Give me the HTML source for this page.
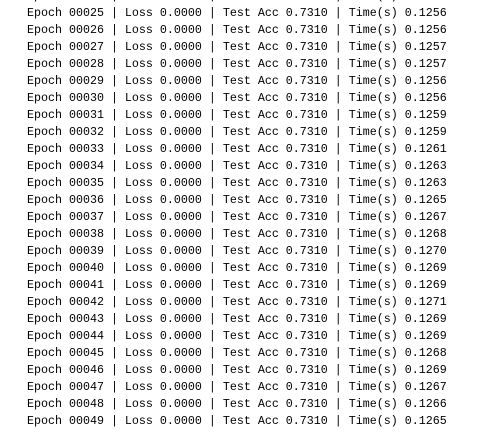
<!DOCTYPE html><html><head><style>
html,body{margin:0;padding:0;background:#fff;width:486px;height:433px;overflow:hidden}
pre{position:absolute;left:27px;top:-12px;margin:0;font-family:"Liberation Mono",monospace;font-size:11.67px;line-height:17px;color:#000}
</style></head><body><pre>Epoch 00024 | Loss 0.0000 | Test Acc 0.7310 | Time(s) 0.1256
Epoch 00025 | Loss 0.0000 | Test Acc 0.7310 | Time(s) 0.1256
Epoch 00026 | Loss 0.0000 | Test Acc 0.7310 | Time(s) 0.1256
Epoch 00027 | Loss 0.0000 | Test Acc 0.7310 | Time(s) 0.1257
Epoch 00028 | Loss 0.0000 | Test Acc 0.7310 | Time(s) 0.1257
Epoch 00029 | Loss 0.0000 | Test Acc 0.7310 | Time(s) 0.1256
Epoch 00030 | Loss 0.0000 | Test Acc 0.7310 | Time(s) 0.1256
Epoch 00031 | Loss 0.0000 | Test Acc 0.7310 | Time(s) 0.1259
Epoch 00032 | Loss 0.0000 | Test Acc 0.7310 | Time(s) 0.1259
Epoch 00033 | Loss 0.0000 | Test Acc 0.7310 | Time(s) 0.1261
Epoch 00034 | Loss 0.0000 | Test Acc 0.7310 | Time(s) 0.1263
Epoch 00035 | Loss 0.0000 | Test Acc 0.7310 | Time(s) 0.1263
Epoch 00036 | Loss 0.0000 | Test Acc 0.7310 | Time(s) 0.1265
Epoch 00037 | Loss 0.0000 | Test Acc 0.7310 | Time(s) 0.1267
Epoch 00038 | Loss 0.0000 | Test Acc 0.7310 | Time(s) 0.1268
Epoch 00039 | Loss 0.0000 | Test Acc 0.7310 | Time(s) 0.1270
Epoch 00040 | Loss 0.0000 | Test Acc 0.7310 | Time(s) 0.1269
Epoch 00041 | Loss 0.0000 | Test Acc 0.7310 | Time(s) 0.1269
Epoch 00042 | Loss 0.0000 | Test Acc 0.7310 | Time(s) 0.1271
Epoch 00043 | Loss 0.0000 | Test Acc 0.7310 | Time(s) 0.1269
Epoch 00044 | Loss 0.0000 | Test Acc 0.7310 | Time(s) 0.1269
Epoch 00045 | Loss 0.0000 | Test Acc 0.7310 | Time(s) 0.1268
Epoch 00046 | Loss 0.0000 | Test Acc 0.7310 | Time(s) 0.1269
Epoch 00047 | Loss 0.0000 | Test Acc 0.7310 | Time(s) 0.1267
Epoch 00048 | Loss 0.0000 | Test Acc 0.7310 | Time(s) 0.1266
Epoch 00049 | Loss 0.0000 | Test Acc 0.7310 | Time(s) 0.1265</pre></body></html>
